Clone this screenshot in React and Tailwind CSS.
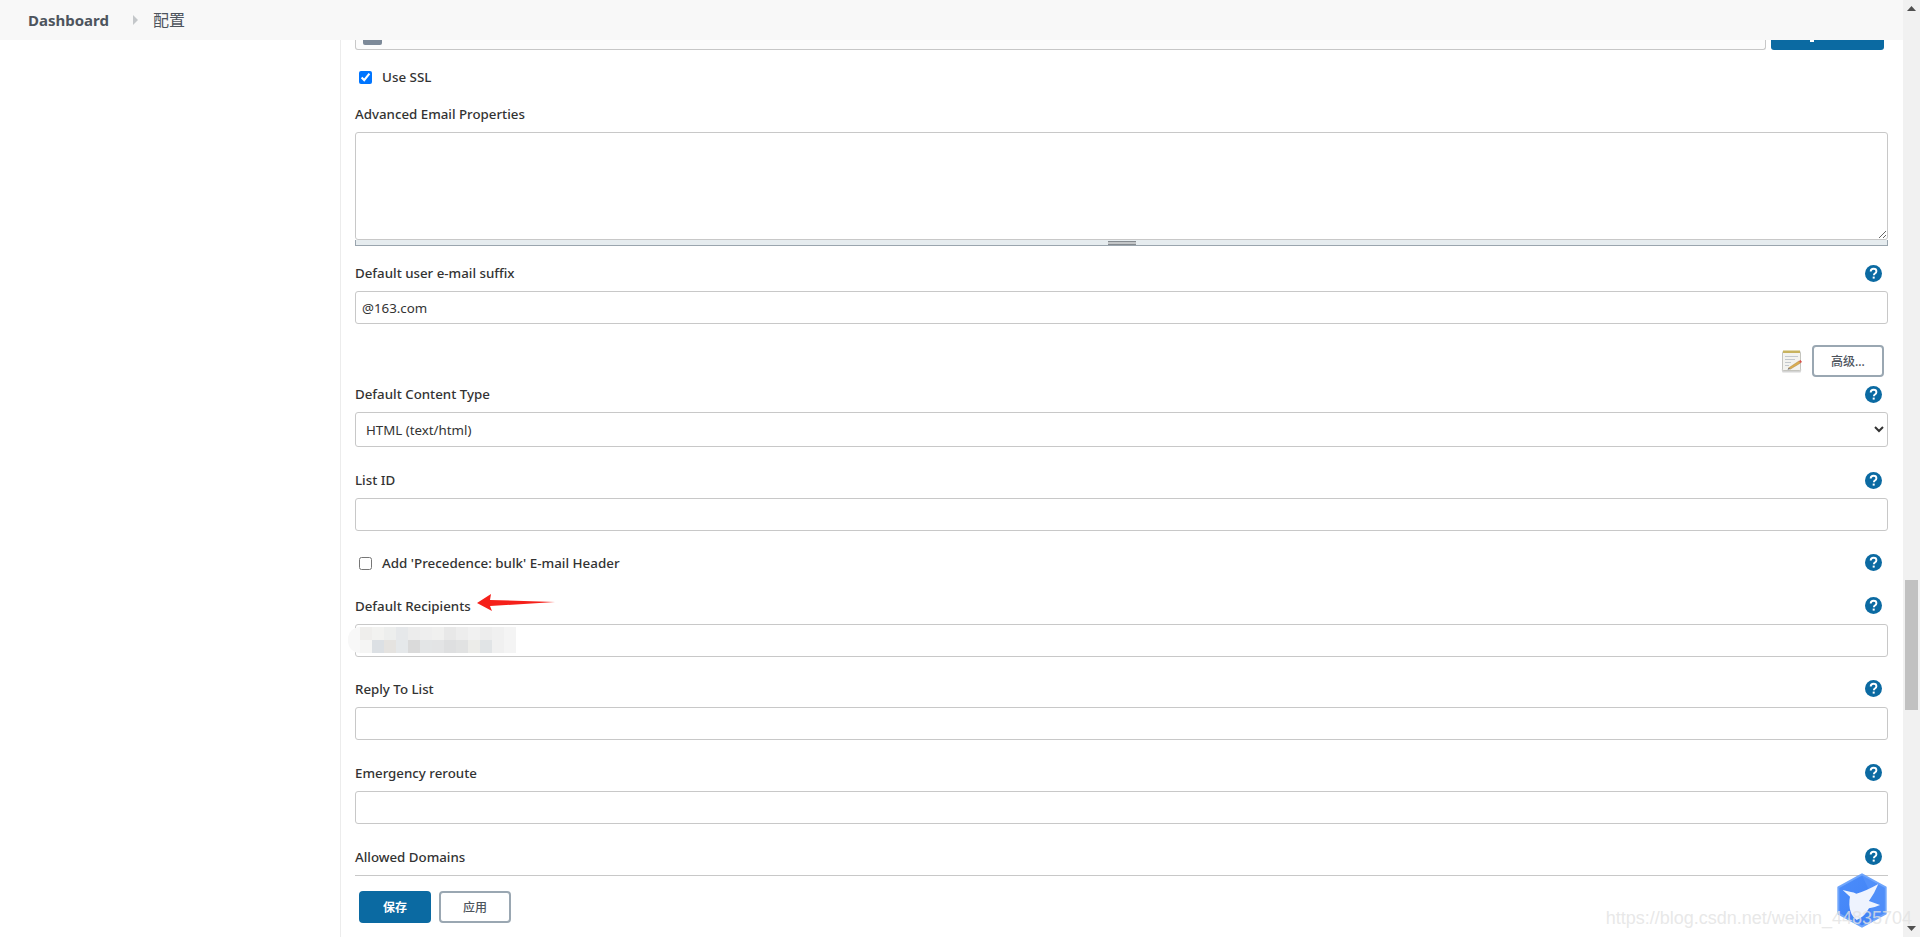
import React from "react";

const font = { fontFamily: '"Noto Sans", "Noto Sans CJK SC", sans-serif' };

function HelpIcon() {
  return (
    <svg width="17" height="17" viewBox="0 0 17 17" className="shrink-0">
      <circle cx="8.5" cy="8.5" r="8.5" fill="#0b6aa2" />
      <path d="M5.7 6.4c0-1.6 1.2-2.6 2.9-2.6s2.8 1 2.8 2.4c0 1.2-.7 1.8-1.5 2.4-.7.5-1 .9-1 1.7" fill="none" stroke="#fff" strokeWidth="1.9" />
      <rect x="7.7" y="11.6" width="2" height="2" fill="#fff" />
    </svg>
  );
}

function Label({ text, help = true, low = false, className = "" }) {
  return (
    <div className={`flex h-5 items-center justify-between pr-[6px] ${className}`}>
      <span className={`text-[13.3px] leading-5 font-medium text-[#333] ${low ? "translate-y-[1px]" : ""}`}>{text}</span>
      {help && <HelpIcon />}
    </div>
  );
}

function TextInput({ value = "", className = "" }) {
  return (
    <input
      type="text"
      defaultValue={value}
      className={`block h-[33px] w-full rounded-[3px] border border-[#c8c8c8] bg-white px-[6px] text-[13.3px] text-[#333] outline-none ${className}`}
    />
  );
}

function CheckRow({ text, checked = false, help = false, className = "" }) {
  return (
    <div className={`flex h-5 items-center pr-[6px] pl-1 ${className}`}>
      <input type="checkbox" defaultChecked={checked} className="h-[13px] w-[13px] accent-[#0075ff]" />
      <span className="ml-[10px] text-[13.4px] leading-5 font-medium text-[#333]">{text}</span>
      {help && (
        <span className="ml-auto -translate-y-[1px]">
          <HelpIcon />
        </span>
      )}
    </div>
  );
}

function NotepadIcon() {
  return (
    <svg width="22" height="23" viewBox="0 0 22 23">
      <path d="M0.5 19.5 L1.5 22.5 H19.5 L20.5 19.5 Z" fill="#d4d4d4" />
      <rect x="1.5" y="1.5" width="18" height="19" rx="1" fill="#f3f3ef" stroke="#c4c4be" />
      <rect x="2" y="0.5" width="17" height="2.5" fill="#c8b35e" />
      <path d="M4 6.5h13M4 9.5h10M4 12.5h6M4 15.5h4" stroke="#c3c8cc" strokeWidth="1" />
      <path d="M7.5 18 L18 11 L19.5 13 L9.5 19 Z" fill="#dcae50" stroke="#a98540" strokeWidth=".5" />
      <path d="M18 11 L19.5 13 L21 12 L19.5 10 Z" fill="#d8504a" />
      <path d="M7.5 18 L6.5 19.8 L9.5 19 Z" fill="#666" />
    </svg>
  );
}

function BirdLogo() {
  return (
    <svg width="50" height="55" viewBox="0 0 150 165">
      <defs>
        <linearGradient id="hexFill" x1="0" y1="0" x2="1" y2="1">
          <stop offset="0" stopColor="#4b8dfb" />
          <stop offset="1" stopColor="#3f7ff4" />
        </linearGradient>
      </defs>
      <path d="M75 4 L146 43 V122 L75 161 L4 122 V43 Z" fill="url(#hexFill)" stroke="#6fa5fb" strokeWidth="6" strokeLinejoin="round" />
      <path d="M75 7 L143 45 V120 L100 144 V60 Z" fill="#5b97fb" opacity=".55" />
      <path d="M17 51 L42 57 Q50 58 58 62 Q85 55 124 33 Q112 62 96 84 L129 96 Q112 104 96 106 Q82 132 59 141 Q38 125 37 95 Q37 78 39 71 Z" fill="#eef3fe" />
    </svg>
  );
}

const mosaicTop = ["bg-[#efeeec]", "bg-[#f2f2f0]", "bg-[#edeeed]", "bg-[#e6e8ea]", "bg-[#ececec]", "bg-[#eeeeee]", "bg-[#f0f0ef]", "bg-[#e8e8e8]", "bg-[#ededed]", "bg-[#f1f1f1]", "bg-[#ededed]", "bg-[#f0f0f0]", "bg-[#f4f4f4]"];
const mosaicBottom = ["bg-[#f5f5f4]", "bg-[#dce0e4]", "bg-[#e5e3e0]", "bg-[#e5e8ea]", "bg-[#dadada]", "bg-[#e3e5e6]", "bg-[#e3e4e5]", "bg-[#dedfe0]", "bg-[#e1e2e2]", "bg-[#ecece9]", "bg-[#e1e4e6]", "bg-[#f0f0f0]", "bg-[#f4f4f4]"];

function Mosaic() {
  return (
    <div className="absolute top-[3px] left-[-7px] flex">
      <div className="h-[26px] w-[12px] rounded-l-full bg-[#f8f8f8]" />
      <div>
        <div className="flex">
          {mosaicTop.map((c, i) => (
            <div key={i} className={`h-[13px] w-[12px] ${c}`} />
          ))}
        </div>
        <div className="flex">
          {mosaicBottom.map((c, i) => (
            <div key={i} className={`h-[13px] w-[12px] ${c}`} />
          ))}
        </div>
      </div>
    </div>
  );
}

export default function App() {
  return (
    <div className="relative flex h-[937px] w-full overflow-hidden bg-white" style={font}>
      <div className="flex min-w-0 flex-1 flex-col">
        <header className="flex h-10 shrink-0 items-center bg-[#f8f8f8] pl-[28px]">
          <span className="text-[15px] font-bold text-[#4d545d]">Dashboard</span>
          <svg width="5" height="10" viewBox="0 0 5 10" className="mr-[15px] ml-[24px]">
            <path d="M0 0 L5 5 L0 10 Z" fill="#c4c7ca" />
          </svg>
          <span className="text-[16px] text-[#4d545d]">配置</span>
        </header>

        <div className="flex min-h-0 flex-1">
          <aside className="w-[341px] shrink-0 border-r border-[#ececec]" />

          <main className="flex min-w-0 flex-1 flex-col pr-[15px] pl-[14px]">
            <div className="flex h-[10px] shrink-0 overflow-hidden">
              <div className="h-[10px] flex-1 rounded-b-[3px] border-x border-b border-[#c8c8c8] bg-[#fcfcfc] pl-[7px]">
                <div className="h-[5px] w-[19px] rounded-b-[2px] bg-[#7d8a99]" />
              </div>
              <div className="mr-1 ml-[5px] h-[10px] w-[113px] rounded-b-[3px] bg-[#0b6aa2] pl-[39px]">
                <div className="h-[2px] w-[4px] bg-white" />
              </div>
            </div>

            <CheckRow text="Use SSL" checked className="mt-[17px]" />

            <Label text="Advanced Email Properties" help={false} className="mt-[17px]" />
            <textarea className="mt-2 block h-[108px] w-full rounded-[3px] border border-[#c8c8c8] bg-white outline-none" />
            <div className="flex h-[6px] items-center justify-center border-x border-b border-[#9aa5ae] bg-[#e6ecef]">
              <div className="h-[4px] w-[28px] border-y border-[#868b90] bg-[#c3c6c8]" />
            </div>

            <Label text="Default user e-mail suffix" className="mt-[17px]" />
            <TextInput value="@163.com" className="mt-2 px-[6px]" />

            <div className="mt-[21px] flex h-[32px] items-center justify-end pr-1">
              <NotepadIcon />
              <button className="ml-[9px] h-[32px] w-[72px] rounded-[4px] border-2 border-[#9aa7b2] bg-white pt-[1px] text-[12px] font-medium text-[#4d545d]">
                高级...
              </button>
            </div>

            <Label text="Default Content Type" className="mt-[7px]" />
            <select className="mt-2 block h-[35px] w-full rounded-[3px] border border-[#c8c8c8] bg-white pl-[6px] text-[13.3px] text-[#333] outline-none">
              <option>HTML (text/html)</option>
            </select>

            <Label text="List ID" className="mt-[23px]" />
            <TextInput className="mt-2" />

            <CheckRow text="Add 'Precedence: bulk' E-mail Header" help className="mt-[22px]" />

            <div className="relative mt-[22px]">
              <Label text="Default Recipients" low />
              <svg width="80" height="18" viewBox="0 0 80 18" className="absolute top-[-1px] left-[122px]">
                <path d="M0 9 L14 0 L13 6 L78 8 L13 12 L15 17 Z" fill="#f5201a" />
              </svg>
            </div>
            <div className="relative mt-[9px]">
              <TextInput />
              <Mosaic />
            </div>

            <Label text="Reply To List" low className="mt-[21px]" />
            <TextInput className="mt-[9px]" />

            <Label text="Emergency reroute" low className="mt-[22px]" />
            <TextInput className="mt-[9px]" />

            <Label text="Allowed Domains" low className="mt-[22px]" />

            <div className="mt-[9px] flex gap-2 border-t border-[#c8c8c8] pt-[15px] pl-1">
              <button className="h-8 w-[72px] rounded-[4px] bg-[#0b6aa2] pt-[1px] text-[12px] font-bold text-white">保存</button>
              <button className="h-8 w-[72px] rounded-[4px] border-2 border-[#9aa7b2] bg-white pt-[1px] text-[12px] font-medium text-[#4d545d]">应用</button>
            </div>
          </main>
        </div>
      </div>

      <div className="flex w-[17px] shrink-0 flex-col items-center bg-[#f1f1f1]">
        <svg width="9" height="5" viewBox="0 0 9 5" className="mt-[6px]">
          <path d="M0 5 L4.5 0 L9 5 Z" fill="#505050" />
        </svg>
        <div className="mt-[569px] h-[130px] w-[13px] bg-[#c1c1c1]" />
        <svg width="9" height="5" viewBox="0 0 9 5" className="mt-auto mb-[6px]">
          <path d="M0 0 L9 0 L4.5 5 Z" fill="#505050" />
        </svg>
      </div>

      {/* client download badge and image host watermark on top of the screenshot */}
      <div className="absolute top-[873px] left-[1837px]">
        <BirdLogo />
      </div>
      <div className="absolute top-[906px] right-[8px] text-[18px] leading-[24px] whitespace-nowrap text-[#e2e2e2]/80" style={{ fontFamily: '"Liberation Sans", sans-serif' }}>
        https://blog.csdn.net/weixin_44835704
      </div>
    </div>
  );
}
